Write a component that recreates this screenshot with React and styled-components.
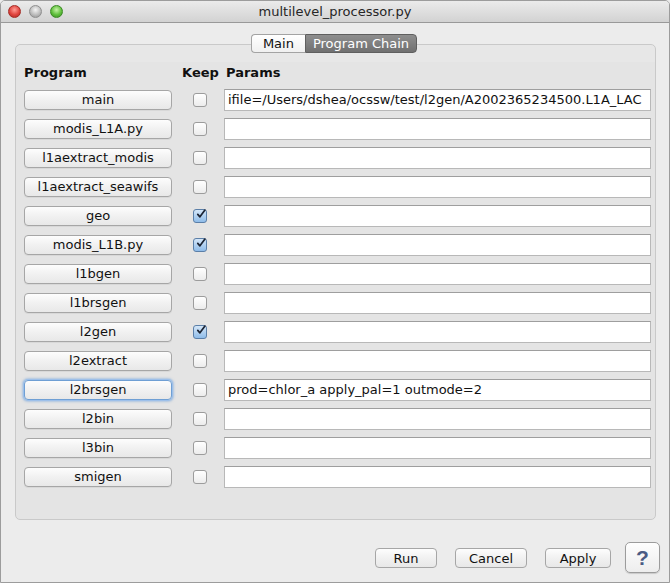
import React from "react";
import styled, { createGlobalStyle } from "styled-components";

const GlobalStyle = createGlobalStyle`
  html, body {
    margin: 0;
    padding: 0;
    background: #ececec;
  }
  * { box-sizing: border-box; }
`;

const Window = styled.div`
  width: 670px;
  height: 583px;
  display: flex;
  flex-direction: column;
  background: #ececec;
  border: 1px solid #9c9c9c;
  border-radius: 5px 5px 0 0;
  overflow: hidden;
  font-family: "DejaVu Sans", "Liberation Sans", sans-serif;
  color: #111;
`;

const TitleBar = styled.div`
  height: 22px;
  flex: none;
  display: flex;
  align-items: center;
  position: relative;
  background: linear-gradient(#ebebeb, #d2d2d2);
  border-bottom: 1px solid #999;
`;

const Lights = styled.div`
  display: flex;
  gap: 8px;
  padding-left: 7px;
`;

const Light = styled.span`
  width: 13px;
  height: 13px;
  border-radius: 50%;
  border: 1px solid ${(p) => p.$edge};
  background: radial-gradient(circle at 50% 35%, ${(p) => p.$hi} 0%, ${(p) => p.$color} 55%, ${(p) => p.$edge} 100%);
`;

const Title = styled.div`
  position: absolute;
  left: 0;
  right: 0;
  text-align: center;
  font-size: 13px;
  color: #262626;
  pointer-events: none;
`;

const Body = styled.div`
  flex: 1;
  display: flex;
  flex-direction: column;
  padding: 11px 9px 9px 14px;
`;

const TabBar = styled.div`
  display: flex;
  justify-content: center;
  margin-bottom: -9px;
  position: relative;
  z-index: 1;
  padding-right: 7px;
`;

const Tab = styled.div`
  height: 19px;
  display: flex;
  align-items: center;
  padding: 0 ${(p) => (p.$first ? 11 : 7)}px;
  font-size: 13px;
  border: 1px solid ${(p) => (p.$active ? "#5f5f5f" : "#a3a3a3")};
  background: ${(p) =>
    p.$active ? "linear-gradient(#8e8e8e, #707070)" : "linear-gradient(#ffffff, #f0f0f0)"};
  color: ${(p) => (p.$active ? "#fff" : "#111")};
  border-radius: ${(p) => (p.$first ? "4px 0 0 4px" : "0 4px 4px 0")};
  ${(p) => (p.$first ? "border-right: none;" : "")}
`;

const Pane = styled.div`
  width: 641px;
  height: 476px;
  flex: none;
  border: 1px solid #c9c9c9;
  border-radius: 5px;
  background: linear-gradient(#e7e7e7 0px, #e7e7e7 17px, #e4e4e4 17px);
  padding: 20px 4px 0 8px;
`;

const Grid = styled.div`
  display: grid;
  grid-template-columns: 148px 53px 1fr;
  grid-template-rows: 20px;
  grid-auto-rows: 29px;
  align-items: center;
`;

const HeadCell = styled.div`
  font-size: 13px;
  font-weight: bold;
  align-self: start;
  padding-left: ${(p) => p.$pad || 0}px;
  text-align: ${(p) => p.$align || "left"};
`;

const ProgButton = styled.div`
  height: 20px;
  display: flex;
  align-items: center;
  justify-content: center;
  font-size: 13px;
  border: 1px solid ${(p) => (p.$focus ? "#6f9fd4" : "#a6a6a6")};
  border-radius: 4px;
  background: linear-gradient(#fdfdfd, #f1f1f1 50%, #e8e8e8);
  box-shadow: ${(p) =>
    p.$focus ? "0 0 0 1px #9dc0ea, 0 0 2px 2px rgba(120,165,220,0.5)" : "0 1px 0 rgba(0,0,0,0.05)"};
`;

const CheckCell = styled.div`
  display: flex;
  justify-content: center;
  padding-left: 3px;
`;

const Check = styled.div`
  width: 14px;
  height: 14px;
  border-radius: 3px;
  border: 1px solid ${(p) => (p.$on ? "#5b7fa8" : "#9c9c9c")};
  background: ${(p) =>
    p.$on ? "linear-gradient(#d4e6f8, #8fbce9)" : "linear-gradient(#ffffff, #ececec)"};
  display: flex;
  align-items: center;
  justify-content: center;
  overflow: visible;
`;

const Field = styled.div`
  height: 22px;
  width: 427px;
  margin-left: -1px;
  display: flex;
  align-items: center;
  padding-left: 3px;
  font-size: 13px;
  background: #fff;
  border: 1px solid #b8b8b8;
  border-top-color: #9e9e9e;
  white-space: nowrap;
  overflow: hidden;
`;

const Footer = styled.div`
  flex: 1;
  display: flex;
  justify-content: flex-end;
  align-items: flex-end;
  gap: 18px;
`;

const DlgButton = styled.div`
  height: 20px;
  width: ${(p) => p.$w}px;
  margin-bottom: 5px;
  display: flex;
  align-items: center;
  justify-content: center;
  font-size: 13px;
  border: 1px solid #a6a6a6;
  border-radius: 4px;
  background: linear-gradient(#fdfdfd, #f1f1f1 50%, #e8e8e8);
`;

const HelpButton = styled.div`
  width: 35px;
  height: 31px;
  margin-left: -4px;
  display: flex;
  align-items: center;
  justify-content: center;
  font-family: "Liberation Sans", sans-serif;
  font-size: 21px;
  font-weight: bold;
  color: #4b5b84;
  border: 1px solid #9c9c9c;
  border-radius: 5px;
  background: linear-gradient(#fefefe, #ededed);
  box-shadow: 0 1px 1px rgba(0, 0, 0, 0.15);
`;

const programs = [
  { name: "main", keep: false, params: "ifile=/Users/dshea/ocssw/test/l2gen/A2002365234500.L1A_LAC" },
  { name: "modis_L1A.py", keep: false },
  { name: "l1aextract_modis", keep: false },
  { name: "l1aextract_seawifs", keep: false },
  { name: "geo", keep: true },
  { name: "modis_L1B.py", keep: true },
  { name: "l1bgen", keep: false },
  { name: "l1brsgen", keep: false },
  { name: "l2gen", keep: true },
  { name: "l2extract", keep: false },
  { name: "l2brsgen", keep: false, focus: true, params: "prod=chlor_a apply_pal=1 outmode=2" },
  { name: "l2bin", keep: false },
  { name: "l3bin", keep: false },
  { name: "smigen", keep: false },
];

function CheckMark() {
  return (
    <svg width="14" height="14" viewBox="0 0 14 14" style={{ marginTop: -3, marginLeft: 2 }}>
      <path d="M2.5 7.5 L5.5 11 L12.5 1.5" fill="none" stroke="#1c2433" strokeWidth="2.4" strokeLinecap="round" strokeLinejoin="round" />
    </svg>
  );
}

export default function App() {
  return (
    <>
      <GlobalStyle />
      <Window>
        <TitleBar>
          <Lights>
            <Light $color="#e0443e" $hi="#ff9c94" $edge="#a52a24" />
            <Light $color="#bdbdbd" $hi="#f4f4f4" $edge="#8e8e8e" />
            <Light $color="#5fbf3c" $hi="#c6f3a6" $edge="#3a8a24" />
          </Lights>
          <Title>multilevel_processor.py</Title>
        </TitleBar>
        <Body>
          <TabBar>
            <Tab $first>Main</Tab>
            <Tab $active>Program Chain</Tab>
          </TabBar>
          <Pane>
            <Grid>
              <HeadCell $pad={-1}>Program</HeadCell>
              <HeadCell $align="center" $pad={4}>Keep</HeadCell>
              <HeadCell $pad={1}>Params</HeadCell>
              {programs.map((p) => (
                <React.Fragment key={p.name}>
                  <ProgButton $focus={p.focus}>{p.name}</ProgButton>
                  <CheckCell>
                    <Check $on={p.keep}>{p.keep && <CheckMark />}</Check>
                  </CheckCell>
                  <Field>{p.params || ""}</Field>
                </React.Fragment>
              ))}
            </Grid>
          </Pane>
          <Footer>
            <DlgButton $w={62}>Run</DlgButton>
            <DlgButton $w={72}>Cancel</DlgButton>
            <DlgButton $w={66}>Apply</DlgButton>
            <HelpButton>?</HelpButton>
          </Footer>
        </Body>
      </Window>
    </>
  );
}
